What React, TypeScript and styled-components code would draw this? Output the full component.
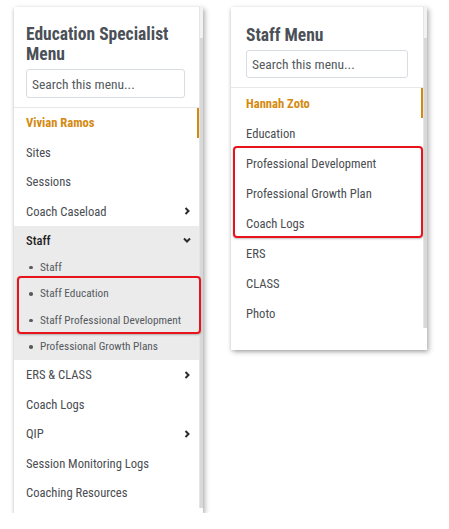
import styled, { createGlobalStyle } from "styled-components";

const GlobalStyle = createGlobalStyle`
  body {
    margin: 0;
    background: #ffffff;
    font-family: "Roboto Condensed", Roboto, "Liberation Sans", sans-serif;
  }
  * {
    box-sizing: border-box;
  }
`;

const Page = styled.div`
  display: flex;
  align-items: flex-start;
  gap: 28px;
  padding: 7px 0 0 14px;
`;

const Panel = styled.aside<{ $width: number; $padBottom: number }>`
  width: ${(p) => p.$width}px;
  display: flex;
  background: #ffffff;
  padding-bottom: ${(p) => p.$padBottom}px;
  box-shadow: 2px 2px 5px rgba(0, 0, 0, 0.3), -1px 1px 3px rgba(0, 0, 0, 0.1);
`;

const Body = styled.div`
  flex: 1;
  min-width: 0;
  display: flex;
  flex-direction: column;
`;

const Track = styled.div`
  width: 4px;
  align-self: stretch;
  background: #d8d8d8;
  border-left: 1px solid #e4e4e4;
`;

const Thumb = styled.div`
  height: 31px;
  background: #f2f2f2;
`;

const Header = styled.div<{ $top: number; $right: number; $left: number }>`
  padding: ${(p) => p.$top}px ${(p) => p.$right}px 9px ${(p) => p.$left}px;
  border-bottom: 1px solid #e8e8e8;
`;

const Title = styled.h2`
  margin: 0 0 5px;
  font-size: 17.5px;
  line-height: 20px;
  font-weight: 700;
  color: #4b5058;
`;

const Search = styled.input<{ $height: number }>`
  display: block;
  width: 100%;
  height: ${(p) => p.$height}px;
  border: 1px solid #d8dde3;
  border-radius: 3px;
  padding: 0 5px;
  font-family: inherit;
  font-size: 13.5px;
  color: #333;
  background: #fff;
  &::placeholder {
    color: #555a60;
  }
`;

const List = styled.ul`
  list-style: none;
  margin: 0;
  padding: 0;
`;

const Item = styled.li<{ $h: number; $active?: boolean; $strong?: boolean; $indent: number }>`
  height: ${(p) => p.$h}px;
  display: flex;
  align-items: center;
  justify-content: space-between;
  padding: 0 6px 0 ${(p) => p.$indent}px;
  font-size: 12.6px;
  color: ${(p) => (p.$active ? "#d48a10" : p.$strong ? "#1f1f1f" : "#4a4d52")};
  font-weight: ${(p) => (p.$active ? 700 : p.$strong ? 500 : 400)};
  border-right: 2px solid ${(p) => (p.$active ? "#d48a10" : "transparent")};
`;

const Group = styled.li`
  background: #ebebeb;
`;

const SubItem = styled.li`
  height: 26.5px;
  display: flex;
  align-items: center;
  padding-left: 15px;
  font-size: 11.3px;
  color: #555a60;
  &::before {
    content: "";
    width: 3.5px;
    height: 3.5px;
    border-radius: 50%;
    background: #5a5a5a;
    margin-right: 7.5px;
  }
`;

const Highlight = styled.div<{ $top: number; $bottom: number; $left: number; $right: number }>`
  position: relative;
  &::after {
    content: "";
    position: absolute;
    top: ${(p) => p.$top}px;
    bottom: ${(p) => p.$bottom}px;
    left: ${(p) => p.$left}px;
    right: ${(p) => p.$right}px;
    border: 2px solid #e8141b;
    border-radius: 4px;
    box-shadow: 0 1px 2px rgba(0, 0, 0, 0.25);
    pointer-events: none;
  }
`;

const Chevron = ({ down }: { down?: boolean }) => (
  <svg width="8" height="8" viewBox="0 0 8 8">
    <polyline
      points={down ? "1,2.5 4,5.5 7,2.5" : "2.5,1 5.5,4 2.5,7"}
      fill="none"
      stroke="#2b2b2b"
      strokeWidth="2"
    />
  </svg>
);

function EducationMenu() {
  const row = 29.5;
  return (
    <Panel $width={189} $padBottom={5}>
      <Body>
        <Header $top={17} $right={14} $left={12}>
          <Title>
            Education Specialist
            <br />
            Menu
          </Title>
          <Search $height={29} placeholder="Search this menu..." />
        </Header>
        <List>
          <Item $h={row} $indent={12} $active>
            Vivian Ramos
          </Item>
          <Item $h={row} $indent={12}>Sites</Item>
          <Item $h={row} $indent={12}>Sessions</Item>
          <Item $h={row} $indent={12}>
            Coach Caseload <Chevron />
          </Item>
          <Group>
            <List>
              <Item $h={28} $indent={12} $strong>
                Staff <Chevron down />
              </Item>
              <SubItem>Staff</SubItem>
              <Highlight $top={-4.5} $bottom={-0.5} $left={3} $right={-2}>
                <SubItem>Staff Education</SubItem>
                <SubItem>Staff Professional Development</SubItem>
              </Highlight>
              <SubItem>Professional Growth Plans</SubItem>
            </List>
          </Group>
          <Item $h={row} $indent={12}>
            ERS &amp; CLASS <Chevron />
          </Item>
          <Item $h={row} $indent={12}>Coach Logs</Item>
          <Item $h={row} $indent={12}>
            QIP <Chevron />
          </Item>
          <Item $h={row} $indent={12}>Session Monitoring Logs</Item>
          <Item $h={row} $indent={12}>Coaching Resources</Item>
        </List>
      </Body>
      <Track>
        <Thumb />
      </Track>
    </Panel>
  );
}

function StaffMenu() {
  const row = 30;
  return (
    <Panel $width={196} $padBottom={22}>
      <Body>
        <Header $top={18} $right={15} $left={15}>
          <Title>Staff Menu</Title>
          <Search $height={28} placeholder="Search this menu..." />
        </Header>
        <List>
          <Item $h={row} $indent={15} $active>
            Hannah Zoto
          </Item>
          <Item $h={row} $indent={15}>Education</Item>
          <Highlight $top={-2} $bottom={0} $left={2} $right={0}>
            <Item $h={row} $indent={15}>Professional Development</Item>
            <Item $h={row} $indent={15}>Professional Growth Plan</Item>
            <Item $h={row} $indent={15}>Coach Logs</Item>
          </Highlight>
          <Item $h={row} $indent={15}>ERS</Item>
          <Item $h={row} $indent={15}>CLASS</Item>
          <Item $h={row} $indent={15}>Photo</Item>
        </List>
      </Body>
      <Track>
        <Thumb />
      </Track>
    </Panel>
  );
}

export default function App() {
  return (
    <>
      <GlobalStyle />
      <Page>
        <EducationMenu />
        <StaffMenu />
      </Page>
    </>
  );
}
